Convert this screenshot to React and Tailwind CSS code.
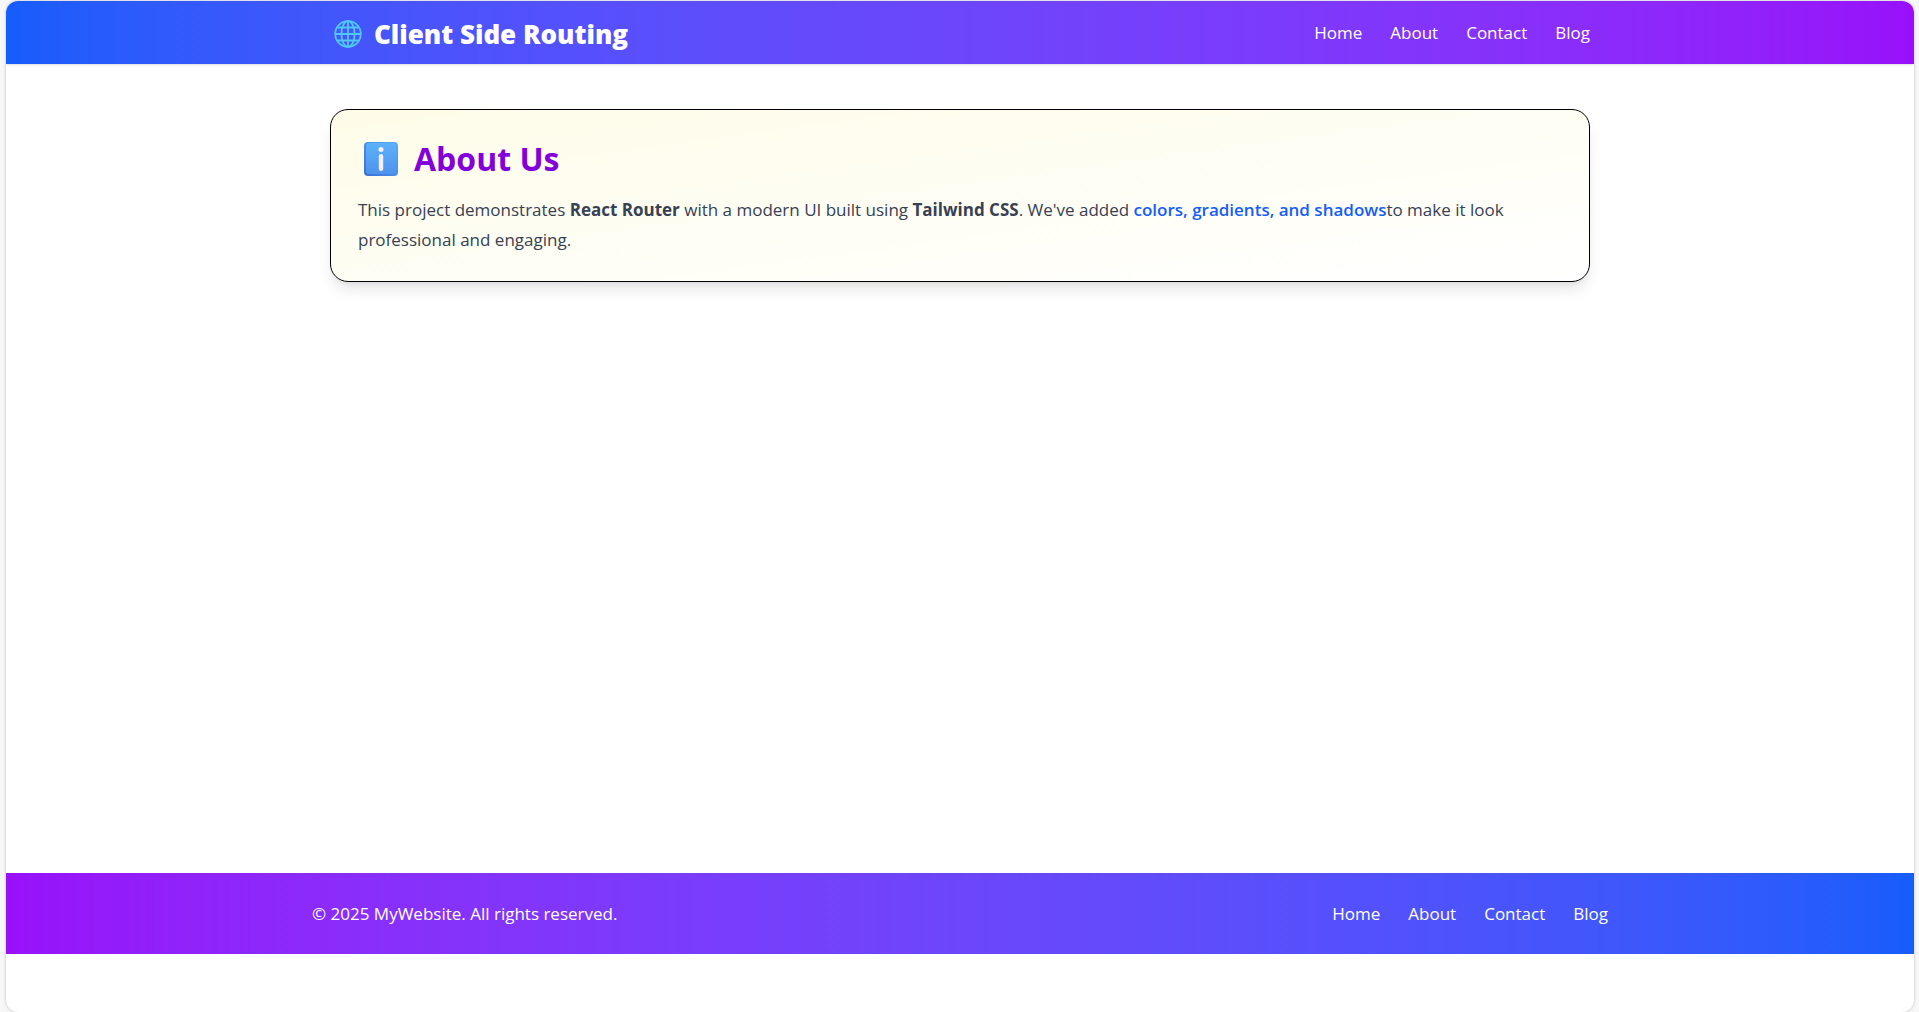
const links = ["Home", "About", "Contact", "Blog"];

function GlobeIcon() {
  return (
    <svg className="size-7" viewBox="0 0 28 28" fill="none" stroke="#50c8f5" strokeWidth="1.8" aria-hidden="true">
      <circle cx="14" cy="14" r="12.8" />
      <ellipse cx="14" cy="14" rx="6.6" ry="12.8" />
      <path d="M14 1v26M1 14h26M3.5 7.5h21M3.5 20.5h21" />
    </svg>
  );
}

function InfoIcon() {
  return (
    <svg className="size-[34px]" viewBox="0 0 34 34" aria-hidden="true">
      <defs>
        <linearGradient id="infoFace" x1="0" y1="0" x2="0" y2="1">
          <stop offset="0" stopColor="#5cb2fb" />
          <stop offset="1" stopColor="#4f92ec" />
        </linearGradient>
        <linearGradient id="infoEdge" x1="1" y1="0" x2="0" y2="1">
          <stop offset="0" stopColor="#5aa9f6" />
          <stop offset="1" stopColor="#3b70d8" />
        </linearGradient>
      </defs>
      <rect width="34" height="34" rx="4" fill="url(#infoEdge)" />
      <rect x="2" y="1" width="30.5" height="31" rx="3" fill="url(#infoFace)" />
      <circle cx="17" cy="7.5" r="2.5" fill="#f4f0ff" />
      <rect x="14.8" y="12" width="4.4" height="17" rx="2.2" fill="#f4f0ff" />
    </svg>
  );
}

function Links({ label }) {
  return (
    <nav aria-label={label}>
      <ul className="flex gap-7">
        {links.map((link) => (
          <li key={link}>
            <a href={`#${link.toLowerCase()}`} className="hover:underline">{link}</a>
          </li>
        ))}
      </ul>
    </nav>
  );
}

export default function App() {
  return (
    <div className="flex min-h-screen flex-col bg-[#f7f7f7] pt-px pr-[5px] pl-1.5 font-['Segoe_UI','Open_Sans',sans-serif] text-[17px] leading-[30px]">
      <div className="flex flex-1 flex-col overflow-hidden rounded-xl bg-white pb-[58px] shadow-[0_0_3px_rgba(0,0,0,0.25)]">
        <header className="bg-linear-to-r from-blue-600 to-purple-600 text-white shadow-sm">
          <div className="mx-auto flex h-[63px] max-w-[1260px] items-center justify-between">
            <div className="flex items-center gap-3 pt-0.5 pl-1">
              <GlobeIcon />
              <span className="text-[26px] font-extrabold">Client Side Routing</span>
            </div>
            <Links label="Main" />
          </div>
        </header>

        <main className="flex-1 pt-[45px]">
          <section className="mx-auto max-w-[1260px] rounded-[18px] border border-black bg-linear-to-br from-yellow-50 to-white px-[27px] pt-7 pb-[26px] shadow-lg">
            <h1 className="flex items-center gap-4 pl-1.5 text-[32px] leading-[42px] font-bold text-purple-700">
              <InfoIcon />
              About Us
            </h1>
            <p className="mt-[15px] text-gray-700">
              This project demonstrates <strong className="font-bold">React Router</strong> with a modern UI built
              using <strong className="font-bold">Tailwind CSS</strong>. We've added{" "}
              <span className="font-semibold text-blue-600">colors, gradients, and shadows</span>to make it look
              professional and engaging.
            </p>
          </section>
        </main>

        <footer className="bg-linear-to-r from-purple-600 to-blue-600 text-white">
          <div className="mx-auto flex h-[81px] max-w-[1296px] items-center justify-between">
            <p>© 2025 MyWebsite. All rights reserved.</p>
            <Links label="Footer" />
          </div>
        </footer>
      </div>
    </div>
  );
}
